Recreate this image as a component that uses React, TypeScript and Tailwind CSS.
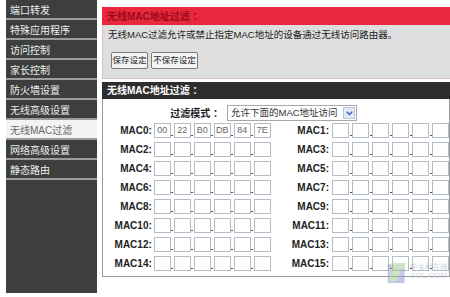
import React from 'react';

const menu = ['端口转发', '特殊应用程序', '访问控制', '家长控制', '防火墙设置', '无线高级设置', '无线MAC过滤', '网络高级设置', '静态路由'];
const firstMac = ['00', '22', 'B0', 'DB', '84', '7E'];
const font = { fontFamily: '"Liberation Sans", "Noto Sans CJK SC", sans-serif' };

const MacInputs: React.FC<{ values?: string[] }> = ({ values }) => (
  <div className="flex items-center">
    {[0, 1, 2, 3, 4, 5].map((i) => (
      <React.Fragment key={i}>
        {i > 0 && (
          <div className="w-[3px] h-[15px] flex items-end justify-center pb-[2px]">
            <div className="w-[2px] h-[1px] bg-[#555]" />
          </div>
        )}
        <div className="w-[17px] h-[15px] border border-[#b4bcc6] bg-white text-[9px] text-[#666] flex items-center justify-center leading-none">
          {values ? values[i] : ''}
        </div>
      </React.Fragment>
    ))}
  </div>
);

export default function App() {
  const rows = [0, 2, 4, 6, 8, 10, 12, 14];
  return (
    <div className="w-[450px] h-[297px] bg-white overflow-hidden flex relative" style={font}>
      <aside className="ml-[6px] w-[91px] h-[293px] bg-[#3d3f3f] shrink-0 flex flex-col">
        {menu.map((m) => {
          const active = m === '无线MAC过滤';
          return (
            <div
              key={m}
              className={`h-[20px] shrink-0 pl-[4px] pt-[3px] flex items-center text-[10px] border-b-2 border-[#9d9d9d] ${
                active ? 'bg-[#f3f3f3] text-[#666]' : 'text-[#ececec]'
              }`}
            >
              {m}
            </div>
          );
        })}
      </aside>

      <main className="ml-[5px] pt-[7px] flex-1 min-w-0 flex flex-col">
        <div className="h-[18px] bg-[#e8283d] pl-[5px] flex items-center text-[10px] font-bold text-[#9a0a1c]">
          无线MAC地址过滤 ：
        </div>
        <div className="h-[54px] bg-[#dedede] border-b border-l border-[#d6c2c4] pl-[5px] pt-[3px] flex flex-col">
          <div className="text-[9.5px] text-[#222] leading-[14px] whitespace-nowrap">
            无线MAC过滤允许或禁止指定MAC地址的设备通过无线访问路由器。
          </div>
          <div className="mt-[10px] flex gap-[3px] ml-[3px]">
            <div className="w-[37px] h-[17px] border border-[#7a7a7a] rounded-[2px] bg-[#f4f4f4] text-[8.5px] text-[#222] whitespace-nowrap flex items-center justify-center">
              保存设定
            </div>
            <div className="w-[47px] h-[17px] border border-[#7a7a7a] rounded-[2px] bg-[#f4f4f4] text-[8.5px] text-[#222] whitespace-nowrap flex items-center justify-center">
              不保存设定
            </div>
          </div>
        </div>

        <div className="mt-[3px] h-[17px] bg-[#2e2e2e] pl-[5px] flex items-center text-[10px] font-bold text-white">
          无线MAC地址过滤 ：
        </div>
        <div className="h-[178px] border border-[#9a9a9a] border-t-0 bg-white flex flex-col">
          <div className="mt-[6px] h-[16px] flex items-center">
            <div className="w-[120px] text-right text-[10px] font-bold text-[#222]">过滤模式 ：</div>
            <div className="ml-[4px] w-[130px] h-[16px] border border-[#a8a8a8] flex items-center justify-between pl-[3px] pr-[1px]">
              <span className="text-[9.5px] text-[#333] whitespace-nowrap">允许下面的MAC地址访问</span>
              <span className="w-[12px] h-[12px] bg-[#dfe8f5] border border-[#b7c6dc] flex items-center justify-center">
                <svg width="7" height="5" viewBox="0 0 7 5">
                  <path d="M0.8 0.8 L3.5 3.6 L6.2 0.8" fill="none" stroke="#3a64b0" strokeWidth="1.4" />
                </svg>
              </span>
            </div>
          </div>
          <div className="mt-[2px] flex flex-col gap-[4px]">
            {rows.map((n) => (
              <div key={n} className="flex items-center h-[15px]">
                <div className="w-[53px] text-right text-[10px] font-bold text-[#222] pr-[1px]">MAC{n}:</div>
                <div className="ml-[1px]">
                  <MacInputs values={n === 0 ? firstMac : undefined} />
                </div>
                <div className="w-[64px] text-right text-[10px] font-bold text-[#222] pr-[2px]">MAC{n + 1}:</div>
                <div className="ml-[1px]">
                  <MacInputs />
                </div>
              </div>
            ))}
          </div>
        </div>
      </main>

      <div className="absolute left-[386px] top-[258px] flex items-center opacity-50 pointer-events-none">
        <svg width="22" height="28" viewBox="0 0 26 30">
          <rect x="2" y="6" width="20" height="22" fill="#8a8fd6" />
          <path d="M6 4 L24 4 L12 26 L4 26 Z" fill="#9ccf7a" opacity="0.8" />
        </svg>
        <div className="ml-[2px] flex flex-col leading-none">
          <span className="text-[7.5px] text-[#8fa8c8]">中关村在线</span>
          <span className="text-[8px] font-bold text-[#b8c4d2]">ZOL.COM</span>
        </div>
      </div>
    </div>
  );
}
